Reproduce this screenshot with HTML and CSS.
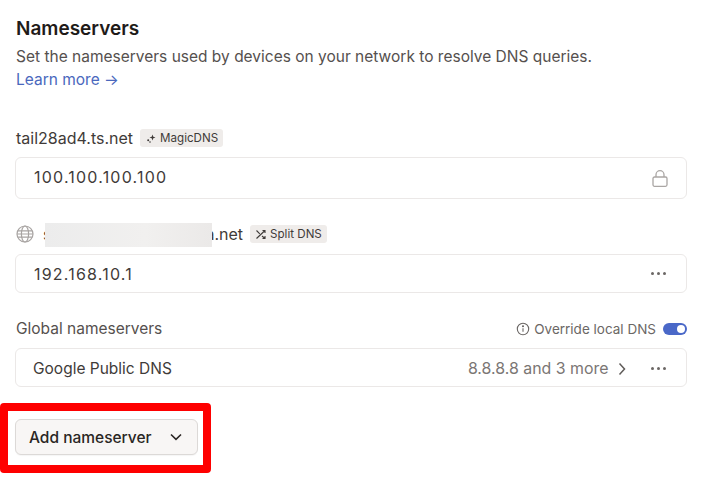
FILE: index.html
```html
<!DOCTYPE html>
<html lang="en">
<head>
<meta charset="utf-8">
<title>Nameservers</title>
<link rel="stylesheet" href="styles.css">
</head>
<body>
<main class="page">
  <h1 class="title">Nameservers</h1>
  <p class="desc">Set the nameservers used by devices on your network to resolve DNS queries.<br><a class="link" href="#">Learn more →</a></p>

  <section class="group group-magic">
    <div class="label-row">
      <span class="label">tail28ad4.ts.net</span>
      <span class="badge">
        <svg class="badge-icon" viewBox="0 0 12 12"><path d="M7.5 2.5 8.3 4.7 10.500 5.500 8.300 6.300 7.500 8.500 6.700 6.300 4.500 5.500 6.700 4.700Z" fill="#3f3b39"/><circle cx="3.200" cy="8.200" r="1" fill="#3f3b39"/><circle cx="5" cy="10" r=".8" fill="#3f3b39"/></svg>
        MagicDNS
      </span>
    </div>
    <div class="card card-lg">
      <span class="value">100.100.100.100</span>
      <svg class="lock" viewBox="0 0 16 17" fill="none" stroke="#aaa6a4" stroke-width="1.300"><rect x="1" y="7" width="14" height="9.300" rx="1.500"/><path d="M4 7V4.700a4 4 0 0 1 8 0V7"/></svg>
    </div>
  </section>

  <section class="group group-split">
    <div class="label-row">
      <svg class="globe" viewBox="0 0 18 18" fill="none" stroke="#a8a4a2" stroke-width="1.200"><circle cx="9" cy="9" r="8"/><ellipse cx="9" cy="9" rx="3.600" ry="8"/><path d="M1 9h16M1.800 5.800h14.400M1.800 12.200h14.400"/></svg>
      <span class="label domain"><span>s</span><span class="hidden-part"></span><span>a.net</span></span>
      <span class="badge">
        <svg class="badge-icon" viewBox="0 0 12 12" fill="none" stroke="#3f3b39" stroke-width="1.100"><path d="M1.500 2.500 4.800 5.800M7 8 10 10.500M1.500 10.500 10 2.500M7.500 2.500H10V5M10 8v2.500H7.500"/></svg>
        Split DNS
      </span>
    </div>
    <div class="card card-md">
      <span class="value">192.168.10.1</span>
      <span class="dots"><i></i><i></i><i></i></span>
    </div>
    <div class="blur-patch"></div>
  </section>

  <section class="group group-global">
    <div class="label-row between">
      <span class="label muted">Global nameservers</span>
      <span class="override">
        <svg class="info" viewBox="0 0 14 14" fill="none" stroke="#6b6765" stroke-width="1.100"><circle cx="7" cy="7" r="5.700"/><path d="M7 6.300v3.500"/><circle cx="7" cy="4.300" r=".5" fill="#6b6765"/></svg>
        Override local DNS
        <span class="toggle"><span class="knob"></span></span>
      </span>
    </div>
    <div class="card card-md card-global">
      <span class="value name">Google Public DNS</span>
      <span class="right">
        <span class="summary">8.8.8.8 and 3 more</span>
        <svg class="chevron" viewBox="0 0 8 14" fill="none" stroke="#5f5b59" stroke-width="1.500"><path d="M1.500 1.500 6.500 7l-5 5.500"/></svg>
        <span class="dots"><i></i><i></i><i></i></span>
      </span>
    </div>
  </section>

  <button class="add" type="button">Add nameserver
    <svg class="caret" viewBox="0 0 12 8" fill="none" stroke="#2a2624" stroke-width="1.600"><path d="M1 1.500 6 6.300l5-4.800"/></svg>
  </button>
  <div class="highlight"></div>
</main>
</body>
</html>
```
FILE: styles.css
```css
* { box-sizing: border-box; }
html, body { margin: 0; padding: 0; background: #fff; }
body { width: 719px; height: 482px; overflow: hidden; font-family: Inter, "Liberation Sans", sans-serif; color: #1f1b19; }
.page { position: relative; padding: 17px 32px 0 15px; height: 482px; }
.title { margin: 0 0 0 1px; font-size: 19px; line-height: 24px; font-weight: 600; color: #1f1b19; }
.desc { margin: 4px 0 0 1px; font-size: 15.500px; line-height: 23px; color: #55504e; }
.link { color: #4a68bd; text-decoration: none; }
.group { position: relative; }
.group-magic { margin-top: 36px; }
.group-split { margin-top: 24px; }
.group-global { margin-top: 24px; }
.label-row { display: flex; align-items: center; gap: 7px; height: 22px; margin-left: 1px; }
.between { justify-content: space-between; padding-top: 2px; }
.label { font-size: 16px; line-height: 22px; color: #3f3b39; white-space: nowrap; }
.muted { font-size: 15.500px; color: #55504e; }
.domain { display: inline-flex; }
.hidden-part { width: 154px; }
.badge { display: inline-flex; align-items: center; gap: 3px; height: 18px; padding: 0 5px; background: #efecea; border-radius: 3px; font-size: 11.600px; color: #3f3b39; white-space: nowrap; }
.badge-icon { width: 12px; height: 12px; flex: none; }
.globe { width: 18px; height: 18px; flex: none; margin-right: 2px; }
.card { display: flex; align-items: center; justify-content: space-between; width: 672px; background: #fff; border: 1px solid #ebe8e7; border-radius: 6px; padding: 0 20px 0 18px; }
.card-lg { height: 42px; margin-top: 8px; padding-right: 18px; }
.card-lg .value { margin-bottom: 2px; }
.card-md { height: 39px; margin-top: 9px; }
.card-global { padding-top: 2px; }
.value { font-size: 16px; letter-spacing: 1.200px; color: #3f3b39; }
.name { font-size: 15.500px; letter-spacing: 0; margin-left: -1px; }
.lock { width: 16px; height: 17px; flex: none; }
.dots { display: inline-flex; gap: 2.500px; }
.dots i { width: 3.500px; height: 3.500px; border-radius: 50%; background: #6b6765; }
.right { display: flex; align-items: center; }
.summary { font-size: 15.900px; color: #7b7674; }
.chevron { width: 8px; height: 14px; margin: 0 25px 0 9px; }
.override { display: inline-flex; align-items: center; gap: 4px; font-size: 13.500px; color: #6b6765; white-space: nowrap; }
.info { width: 14px; height: 14px; }
.toggle { display: inline-block; width: 24px; height: 12px; margin-left: 3px; border-radius: 6px; background: #4a68c8; position: relative; }
.knob { position: absolute; right: 2px; top: 2px; width: 8px; height: 8px; border-radius: 50%; background: #fff; }
.add { display: flex; align-items: center; justify-content: space-between; width: 183px; height: 36px; margin-top: 32px; padding: 0 15px 0 13px; background: #f8f6f5; border: 1px solid #dcd9d7; border-radius: 6px; font-family: inherit; font-size: 15.500px; font-weight: 450; color: #2a2624; box-shadow: 0 1px 1px rgba(0,0,0,.04); }
.caret { width: 12px; height: 8px; }
.blur-patch { position: absolute; left: 30px; top: 0; width: 167px; height: 24px; background: linear-gradient(90deg, #ececec, #f1f0ef 60%, #ebe9e8); filter: blur(.6px); }
.highlight { position: absolute; left: 0; top: 403px; width: 211px; height: 70px; border: 8px solid #fe0000; border-radius: 4px; pointer-events: none; }
```
